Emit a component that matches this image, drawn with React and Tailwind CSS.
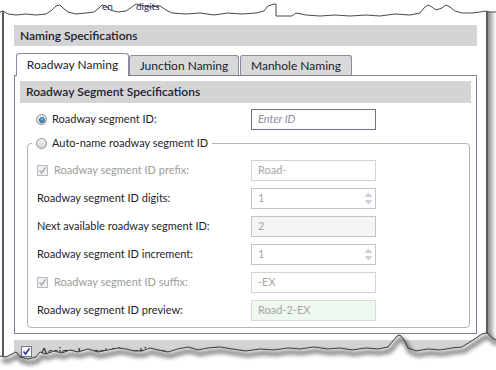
import React from "react";

const font = "font-['Lato','Liberation_Sans',sans-serif]";

const Radio = ({ checked }) => (
  <span className="relative inline-flex h-[11px] w-[11px] shrink-0 items-center justify-center rounded-full border border-[#8e8e8e] bg-gradient-to-b from-[#f4f4f4] to-[#d6d6d6]">
    {checked && (
      <span className="h-[6px] w-[6px] rounded-full border border-[#1d5f8c] bg-gradient-to-b from-[#7fd0f4] to-[#1a7fbf]" />
    )}
  </span>
);

const CheckBox = ({ disabled }) => (
  <span
    className={`inline-flex h-[11px] w-[11px] shrink-0 items-center justify-center border ${
      disabled ? "border-[#b8b8b8] bg-[#f1f1f1]" : "border-[#7a7a8c] bg-white"
    }`}
  >
    <svg width="9" height="9" viewBox="0 0 9 9">
      <path
        d="M1.5 4.6 L3.5 7 L7.6 1.4"
        fill="none"
        stroke={disabled ? "#a8a8b8" : "#2a2f8c"}
        strokeWidth="1.6"
      />
    </svg>
  </span>
);

const Spin = () => (
  <span className="flex flex-col items-center gap-[3px] pr-[2px]">
    <svg width="9" height="5" viewBox="0 0 9 5">
      <path d="M0.5 5 L4.5 0.5 L8.5 5 Z" fill="#cfcfd6" />
    </svg>
    <svg width="9" height="5" viewBox="0 0 9 5">
      <path d="M0.5 0 L4.5 4.5 L8.5 0 Z" fill="#cfcfd6" />
    </svg>
  </span>
);

const Field = ({ value, spin, tone = "plain" }) => {
  const styles = {
    plain: "border-[#d4d4d8] bg-white",
    spin: "border-[#c4c2d0] bg-white",
    read: "border-[#c4c2d0] bg-[#f5f5f5]",
    ok: "border-[#d4dcd4] bg-[#eef8ee]",
  };
  return (
    <div
      className={`flex h-[21px] w-[125px] items-center justify-between border pl-[6px] text-[11px] text-[#a6a6a6] ${styles[tone]}`}
    >
      <span>{value}</span>
      {spin && <Spin />}
    </div>
  );
};

const rows = [
  { label: "Roadway segment ID prefix:", check: true, value: "Road-", tone: "plain" },
  { label: "Roadway segment ID digits:", value: "1", spin: true, tone: "spin" },
  { label: "Next available roadway segment ID:", value: "2", tone: "read" },
  { label: "Roadway segment ID increment:", value: "1", spin: true, tone: "spin" },
  { label: "Roadway segment ID suffix:", check: true, value: "-EX", tone: "plain" },
  { label: "Roadway segment ID preview:", value: "Road-2-EX", tone: "ok" },
];

const topEdge =
  "0,12 3,11 8,14 16,15 26,14 36,15 46,14 52,10 56,6 60,5 63,8 68,12 76,14 86,13 94,12 99,8 102,5 106,6 110,10 118,12 126,11 132,7 136,4 140,5 150,7 160,6 166,10 172,13 186,14 200,13 214,15 228,13 242,14 256,13 264,11 268,6 271,5 274,4 276,4 276,16 292,16 296,13 306,15 320,16 335,15 350,16 366,15 380,16 395,14 410,15 420,13 424,8 428,5 432,7 436,10 442,8 446,5 450,7 455,11 462,13 472,13 480,12 486,11 490,12 496,12";

const bottomEdge =
  "0,356 6,357 12,354 16,352 20,357 28,359 36,357 40,352 46,354 54,351 62,353 70,350 78,352 88,349 98,352 108,350 118,348 126,349 134,351 142,351 150,348 158,350 168,352 178,349 188,347 198,350 208,348 220,347 232,349 246,351 260,349 274,350 288,348 300,349 314,347 328,349 340,348 352,350 366,348 378,349 388,347 393,341 397,336 400,335 404,340 408,348 416,351 428,349 440,350 452,348 462,347 470,342 476,338 482,334 486,333 488,334 492,338 496,340";

export default function App() {
  return (
    <div className={`relative h-[370px] w-[496px] overflow-hidden bg-white ${font}`}>
      <div className="ml-[2px] h-[370px] w-[486px] border-x-2 border-[#5c5c5c] pl-[10px] pr-[9px] pt-[25px] shadow-[4px_0_5px_rgba(0,0,0,0.45)]">
        <div className="flex h-[21px] items-center bg-[#d4d4d4] pl-[6px] text-[12px] font-semibold text-[#1c1c30]">
          Naming Specifications
        </div>

        <div className="mt-[7px] flex items-end pl-[2px] text-[12px] text-[#1c1c30]">
          <div className="relative z-10 -mb-px flex h-[23px] w-[113px] items-center justify-center rounded-t-[3px] border border-b-0 border-[#8a8aa0] bg-white">
            Roadway Naming
          </div>
          <div className="flex h-[20px] w-[110px] items-center justify-center rounded-t-[3px] border border-b-0 border-[#8a8aa0] bg-[#d9d9d9]">
            Junction Naming
          </div>
          <div className="ml-px flex h-[20px] w-[112px] items-center justify-center rounded-t-[3px] border border-b-0 border-[#8a8aa0] bg-[#d9d9d9]">
            Manhole Naming
          </div>
        </div>

        <div className="border border-[#7e7e98] px-[5px] pb-[5px] pt-[5px] text-[11px] text-[#1e1e2e]">
          <div className="flex h-[22px] items-center bg-[#d4d4d4] pl-[6px] text-[12px] font-semibold text-[#1c1c30]">
            Roadway Segment Specifications
          </div>

          <div className="mt-[6px] grid grid-cols-[231px_125px] items-center">
            <label className="flex items-center gap-[5px] pl-[16px]">
              <Radio checked />
              <span>Roadway segment ID:</span>
            </label>
            <div className="flex h-[21px] items-center border border-[#6e6e88] bg-white pl-[6px] italic text-[#8c8c9a]">
              Enter ID
            </div>
          </div>

          <fieldset className="ml-[7px] mr-[1px] mt-[5px] rounded-[4px] border border-[#b4b4bc] pb-[6px] pt-[8px]">
            <legend className="ml-[4px] flex items-center gap-[5px] px-[4px]">
              <Radio />
              <span>Auto-name roadway segment ID</span>
            </legend>
            <div className="flex flex-col gap-[7px]">
              {rows.map((r) => (
                <div key={r.label} className="grid grid-cols-[214px_125px] items-center pl-[9px]">
                  {r.check ? (
                    <span className="flex items-center gap-[6px] text-[#9c9c9c]">
                      <CheckBox disabled />
                      {r.label}
                    </span>
                  ) : (
                    <span>{r.label}</span>
                  )}
                  <Field value={r.value} spin={r.spin} tone={r.tone} />
                </div>
              ))}
            </div>
          </fieldset>
        </div>

        <div className="mt-[6px] flex h-[22px] items-start gap-[8px] bg-[#d4d4d4] pl-[7px] pt-[6px] text-[12px] leading-[12px] text-[#1c1c30]">
          <CheckBox />
          <span>Assign Invert Elevations</span>
        </div>
      </div>

      <div className="pointer-events-none absolute left-0 top-0 h-[22px] w-[496px]">
        <svg width="496" height="22" viewBox="0 0 496 22" className="absolute left-0 top-0">
          <polygon points={`0,0 496,0 ${topEdge.split(" ").reverse().join(" ")}`} fill="#ffffff" />
          <polyline points={topEdge} fill="none" stroke="#4a4a4a" strokeWidth="1" />
        </svg>
        <span className="absolute left-[102px] top-[1px] text-[10px] leading-[10px] text-[#2a2a5a]">en</span>
        <span className="absolute left-[136px] top-[1px] text-[10px] leading-[10px] text-[#2a2a5a]">digits</span>
      </div>

      <svg
        width="496"
        height="370"
        viewBox="0 0 496 370"
        className="pointer-events-none absolute left-0 top-0"
      >
        <defs>
          <filter id="tear" x="-5%" y="-50%" width="110%" height="200%">
            <feGaussianBlur stdDeviation="2.2" />
          </filter>
        </defs>
        <polygon points={`${bottomEdge} 496,370 0,370`} fill="#ffffff" />
        <polyline
          points={bottomEdge}
          transform="translate(2 4)"
          fill="none"
          stroke="#000000"
          strokeOpacity="0.55"
          strokeWidth="4"
          filter="url(#tear)"
        />
        <polyline points={bottomEdge} fill="none" stroke="#3c3c3c" strokeWidth="1" />
      </svg>
    </div>
  );
}
